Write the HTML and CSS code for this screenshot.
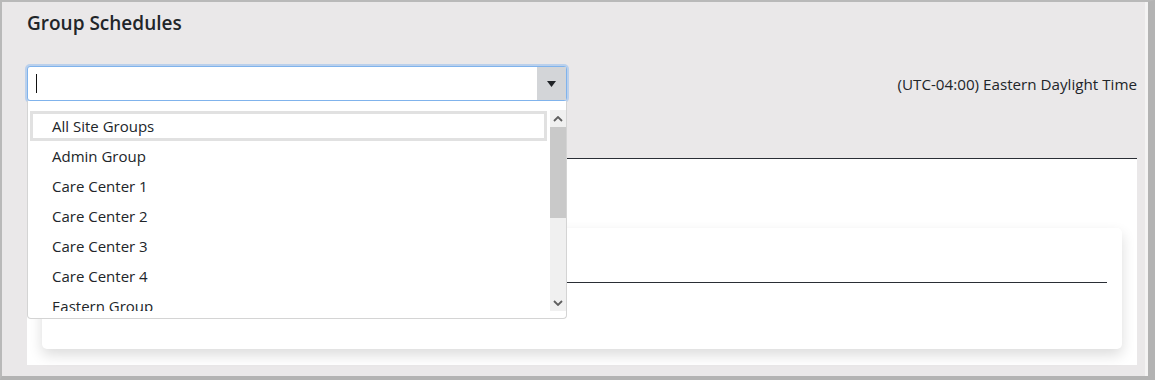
FILE: index.html
```html
<!doctype html>
<html>

<head>
  <title>Group Schedules</title>
  <link rel="stylesheet" href="styles.css">
</head>

<body>
  <div class="frame">
    <h1 class="page-title">Group Schedules</h1>

    <div class="toolbar">
      <div class="combo">
        <div class="combo-input">
          <span class="caret"></span>
          <span class="combo-button"><svg width="9" height="6" viewBox="0 0 9 6">
              <path d="M0 0 H9 L4.5 6 Z" fill="#1f2327" />
            </svg></span>
        </div>
        <div class="combo-list">
          <div class="combo-items">
            <div class="combo-item combo-item--active">All Site Groups</div>
            <div class="combo-item">Admin Group</div>
            <div class="combo-item">Care Center 1</div>
            <div class="combo-item">Care Center 2</div>
            <div class="combo-item">Care Center 3</div>
            <div class="combo-item">Care Center 4</div>
            <div class="combo-item">Eastern Group</div>
          </div>
          <div class="scrollbar">
            <span class="scroll-arrow"><svg width="10" height="6" viewBox="0 0 10 6">
                <path d="M1 5 L5 1 L9 5" fill="none" stroke="#5f5f5f" stroke-width="1.8" />
              </svg></span>
            <span class="scroll-thumb"></span>
            <span class="scroll-track"></span>
            <span class="scroll-arrow"><svg width="10" height="6" viewBox="0 0 10 6">
                <path d="M1 1 L5 5 L9 1" fill="none" stroke="#5f5f5f" stroke-width="1.8" />
              </svg></span>
          </div>
        </div>
      </div>
      <div class="timezone">(UTC-04:00) Eastern Daylight Time</div>
    </div>

    <section class="panel">
      <div class="card">
        <div class="card-rule"></div>
      </div>
    </section>
  </div>
</body>

</html>
```

FILE: styles.css
```css
* {
  box-sizing: border-box;
  margin: 0;
  padding: 0;
}

html,
body {
  width: 100%;
  height: 100%;
  overflow: hidden;
}

body {
  font-family: "Open Sans", "Noto Sans", sans-serif;
  color: #212529;
}

.frame {
  height: 380px;
  background: #eae8e9;
  border-top: 2px solid #b9b9b9;
  border-left: 2px solid #b9b9b9;
  border-right: 7px solid #b3b3b3;
  border-bottom: 4px solid #b3b3b3;
  box-shadow: inset -3px 0 0 #f4f3f3;
  padding: 0 11px 0 25px;
  display: flex;
  flex-direction: column;
}

/** Title */

.page-title {
  font-size: 19px;
  font-weight: 600;
  line-height: 24px;
  margin-top: 9px;
}

/** Toolbar */

.toolbar {
  display: flex;
  flex-direction: row;
  justify-content: space-between;
  align-items: center;
  margin-top: 31px;
}

.timezone {
  font-size: 15.2px;
}

.combo {
  position: relative;
  width: 540px;
}

.combo-input {
  height: 35px;
  background: #fff;
  border: 1px solid #80b3ec;
  border-radius: 3px;
  box-shadow: 0 0 0 2px rgba(128, 180, 240, 0.45);
  display: flex;
  flex-direction: row;
  align-items: center;
  justify-content: space-between;
  padding-left: 8px;
}

.caret {
  width: 1px;
  height: 19px;
  background: #111;
}

.combo-button {
  width: 29px;
  height: 100%;
  background: #d3d5d8;
  display: flex;
  align-items: center;
  justify-content: center;
}

/** Open list, lies over the panel */

.combo-list {
  position: absolute;
  top: 100%;
  left: 0;
  right: 0;
  z-index: 20;
  background: #fff;
  border: 1px solid #d4d4d4;
  border-top: none;
  border-radius: 0 0 4px 4px;
  padding: 9px 0 7px 2px;
  display: flex;
  flex-direction: row;
  gap: 3px;
}

.combo-items {
  flex: 1;
  height: 201px;
  overflow: hidden;
  padding-top: 1px;
}

.combo-item {
  height: 30px;
  line-height: 30px;
  font-size: 15px;
  padding-left: 22px;
  white-space: nowrap;
}

.combo-item--active {
  border: 3px solid #e1e1e1;
  line-height: 24px;
  padding-left: 19px;
}

.scrollbar {
  width: 16px;
  height: 201px;
  display: flex;
  flex-direction: column;
  background: #f0f0f0;
}

.scroll-arrow {
  height: 17px;
  display: flex;
  align-items: center;
  justify-content: center;
}

.scroll-thumb {
  height: 91px;
  background: #c9c9c9;
}

.scroll-track {
  flex: 1;
}

/** Panel */

.panel {
  margin-top: 57px;
  height: 207px;
  background: #fff;
  border-top: 1px solid #2a2e35;
  padding: 69px 15px 0;
}

.card {
  height: 121px;
  background: #fff;
  border-radius: 5px;
  box-shadow: 0 6px 14px rgba(0, 0, 0, 0.14);
  padding: 54px 15px 0;
}

.card-rule {
  border-top: 1px solid #2a2e35;
}
```
